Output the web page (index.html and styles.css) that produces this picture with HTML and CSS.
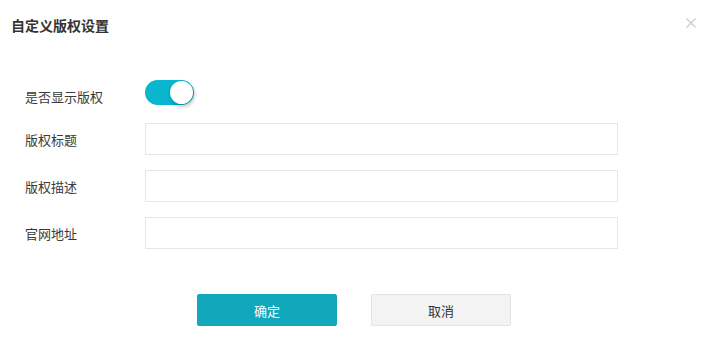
FILE: index.html
```html
<!DOCTYPE html>
<html lang="zh-CN">
<head>
    <meta charset="UTF-8">
    <title>自定义版权设置</title>
    <link rel="stylesheet" href="styles.css">
</head>
<body>
    <div class="dialog">
        <div class="dialog-header">
            <div class="dialog-title">自定义版权设置</div>
            <span class="dialog-close">
                <svg width="10" height="10" viewBox="0 0 10 10">
                    <path d="M0.5 0.5 L9.5 9.5 M9.5 0.5 L0.5 9.5" stroke="#cfcfcf" stroke-width="1.4" fill="none"/>
                </svg>
            </span>
        </div>

        <div class="form">
            <div class="form-row form-row-switch">
                <label class="form-label">是否显示版权</label>
                <div class="switch on"><span class="switch-knob"></span></div>
            </div>
            <div class="form-row">
                <label class="form-label">版权标题</label>
                <input class="form-input" type="text">
            </div>
            <div class="form-row">
                <label class="form-label">版权描述</label>
                <input class="form-input" type="text">
            </div>
            <div class="form-row">
                <label class="form-label">官网地址</label>
                <input class="form-input" type="text">
            </div>
        </div>

        <div class="dialog-footer">
            <button class="btn btn-primary">确定</button>
            <button class="btn btn-default">取消</button>
        </div>
    </div>
</body>
</html>
```

FILE: styles.css
```css
body {
    margin: 0;
    background: #fff;
    font-family: "Noto Sans CJK SC", "Liberation Sans", sans-serif;
    color: #333;
}
.dialog {
    width: 711px;
    height: 350px;
}
.dialog-header {
    height: 50px;
    display: flex;
    align-items: center;
    justify-content: space-between;
    padding: 0 15px 0 11px;
}
.dialog-title {
    font-size: 14px;
    font-weight: bold;
    color: #333;
    line-height: 20px;
}
.dialog-close {
    display: flex;
    margin-top: -4px;
}
.form {
    margin-top: 30px;
    padding-left: 25px;
}
.form-row {
    display: flex;
    align-items: center;
    height: 32px;
    margin-bottom: 15px;
}
.form-row:last-child {
    margin-bottom: 0;
}
.form-row-switch {
    align-items: flex-start;
    margin-bottom: 11px;
}
.form-row-switch .form-label {
    line-height: 34px;
}
.form-label {
    width: 120px;
    font-size: 13px;
    color: #3a3a3a;
}
.form-input {
    box-sizing: border-box;
    width: 473px;
    height: 32px;
    margin: 0;
    border: 1px solid #e6e6e6;
    border-radius: 0;
    outline: none;
}
.switch {
    box-sizing: border-box;
    width: 49px;
    height: 25px;
    border-radius: 13px;
    background: #09b6ce;
    display: flex;
    align-items: center;
    justify-content: flex-end;
    padding: 0 1px;
}
.switch-knob {
    width: 23px;
    height: 23px;
    border-radius: 50%;
    background: #fff;
    box-shadow: 1px 2px 4px rgba(0, 0, 0, 0.3);
}
.dialog-footer {
    display: flex;
    justify-content: center;
    gap: 34px;
    margin-top: 45px;
    padding-right: 3px;
}
.btn {
    box-sizing: border-box;
    width: 140px;
    height: 32px;
    font-family: inherit;
    font-size: 13px;
    border-radius: 2px;
    cursor: pointer;
}
.btn-primary {
    background: #12a8bc;
    border: 1px solid #12a8bc;
    color: #fff;
}
.btn-default {
    background: #f3f3f3;
    border: 1px solid #e3e3e3;
    color: #333;
}
```
